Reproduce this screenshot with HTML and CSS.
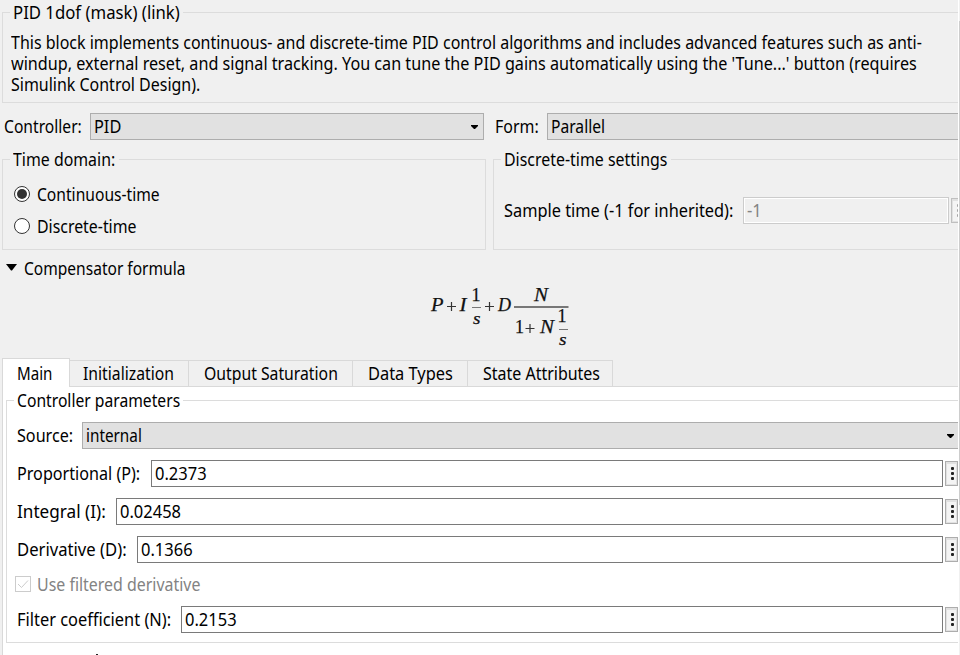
FILE: index.html
```html
<!DOCTYPE html>
<html lang="en">
<head>
<meta charset="utf-8">
<title>Block Parameters: PID Controller</title>
<link rel="stylesheet" href="styles.css">
</head>
<body>
<div class="dialog">
<main class="content">
  <section class="group about">
    <h2 class="legend l-title"><span class="t-title">PID 1dof (mask) (link)</span></h2>
    <p class="desc"><span class="t-d1">This block implements continuous- and discrete-time PID control algorithms and includes advanced features such as anti-</span><br><span class="t-d2">windup, external reset, and signal tracking. You can tune the PID gains automatically using the 'Tune...' button (requires</span><br><span class="t-d3">Simulink Control Design).</span></p>
  </section>

  <div class="row selectors">
    <label class="lab-controller"><span class="t-ctrl">Controller:</span></label>
    <div class="select sel-controller"><span class="t-pid">PID</span><svg class="caret" viewBox="0 0 7 4"><path d="M0 0h7v1L4 4H3L0 1z"/></svg></div>
    <label class="lab-form"><span class="t-form">Form:</span></label>
    <div class="select sel-form"><span class="t-par">Parallel</span></div>
  </div>

  <div class="row domains">
    <section class="group time">
      <h2 class="legend l-td"><span class="t-td">Time domain:</span></h2>
      <label class="radio"><svg viewBox="0 0 16 16"><circle cx="8" cy="8" r="7.5"/><circle class="dot" cx="8" cy="8" r="5"/></svg><span class="t-ct">Continuous-time</span></label>
      <label class="radio"><svg viewBox="0 0 16 16"><circle cx="8" cy="8" r="7.5"/></svg><span class="t-dt">Discrete-time</span></label>
    </section>
    <section class="group discrete">
      <h2 class="legend l-ds"><span class="t-ds">Discrete-time settings</span></h2>
      <div class="sample">
        <label><span class="t-st">Sample time (-1 for inherited):</span></label>
        <div class="input off"><span>-1</span></div>
        <div class="more off"><i></i><i></i><i></i></div>
      </div>
    </section>
  </div>

  <div class="fold"><svg viewBox="0 0 11 7"><path d="M0 0h11L6 6.5H5z"/></svg><span class="t-cf">Compensator formula</span></div>

  <div class="formula">
    <svg width="150" height="70" viewBox="0 0 150 70">
      <g class="it">
        <text x="6" y="30.500" textLength="12.500" lengthAdjust="spacingAndGlyphs">P</text>
        <text x="34.500" y="30.500" textLength="7" lengthAdjust="spacingAndGlyphs">I</text>
        <text x="48" y="44" class="s" textLength="7.500" lengthAdjust="spacingAndGlyphs">s</text>
        <text x="73" y="30.500" textLength="13" lengthAdjust="spacingAndGlyphs">D</text>
        <text x="109" y="20.500" textLength="14" lengthAdjust="spacingAndGlyphs">N</text>
        <text x="115" y="53" textLength="14" lengthAdjust="spacingAndGlyphs">N</text>
        <text x="134" y="65" class="s" textLength="7.500" lengthAdjust="spacingAndGlyphs">s</text>
      </g>
      <g class="num">
        <text x="46.500" y="21">1</text>
        <text x="90" y="53">1</text>
        <text x="132.500" y="42">1</text>
      </g>
      <path class="plus" d="M22 26.500h9M26.500 22v9M60 26.500h9M64.500 22v9M100.500 48.500h9M105 44v9"/>
      <path class="bar" d="M47 27.500h9M134 49.500h9"/>
      <path class="bar main" d="M89 27h54.500"/>
    </svg>
  </div>

  <nav class="tabs">
    <div class="tab on w1"><span class="t-t1">Main</span></div>
    <div class="tab w2"><span class="t-t2">Initialization</span></div>
    <div class="tab w3"><span class="t-t3">Output Saturation</span></div>
    <div class="tab w4"><span class="t-t4">Data Types</span></div>
    <div class="tab w5"><span class="t-t5">State Attributes</span></div>
    <div class="rest"></div>
  </nav>

  <div class="panel">
    <section class="group params">
      <h2 class="legend l-cp"><span class="t-cp">Controller parameters</span></h2>
      <div class="field source"><label><span class="t-src">Source:</span></label><div class="select"><span class="t-int">internal</span><svg class="caret" viewBox="0 0 7 4"><path d="M0 0h7v1L4 4H3L0 1z"/></svg></div></div>
      <div class="field p"><label><span class="t-p">Proportional (P):</span></label><div class="input"><span>0.2373</span></div><div class="more"><i></i><i></i><i></i></div></div>
      <div class="field i"><label><span class="t-i">Integral (I):</span></label><div class="input"><span>0.02458</span></div><div class="more"><i></i><i></i><i></i></div></div>
      <div class="field d"><label><span class="t-dv">Derivative (D):</span></label><div class="input"><span>0.1366</span></div><div class="more"><i></i><i></i><i></i></div></div>
      <label class="check"><svg viewBox="0 0 16 16"><rect x=".5" y=".5" width="15" height="15"/><path d="M3 8l3.500 3.500L13 4.500"/></svg><span class="t-ufd">Use filtered derivative</span></label>
      <div class="field n"><label><span class="t-fc">Filter coefficient (N):</span></label><div class="input"><span>0.2153</span></div><div class="more"><i></i><i></i><i></i></div></div>
    </section>
    <div class="next"></div>
  </div>
</main>
<aside class="scroll"></aside>
</div>
</body>
</html>
```
FILE: styles.css
```css
* { box-sizing: border-box; margin: 0; padding: 0; }
body { width: 960px; height: 655px; overflow: hidden; background: #f0f0f0; color: #000;
  font: 17.5px/21px "Noto Sans", sans-serif; }
svg { display: block; flex: none; }

/* Narrow the UI face; --s is the width factor of each label */
span { --s: .97; display: inline-block; vertical-align: top; white-space: nowrap; transform-origin: 0 50%; transform: scaleX(calc(var(--s) * .971)); }
.t-title { --s: .985; } .t-d1 { --s: .941; } .t-d2 { --s: .951; } .t-d3 { --s: .94; }
.t-ctrl { --s: .92; } .t-pid { --s: .96; } .t-form { --s: .94; } .t-par { --s: .92; }
.t-td { --s: .935; } .t-ct { --s: .919; } .t-dt { --s: .934; } .t-ds { --s: .937; } .t-st { --s: .962; }
.t-cf { --s: .915; }
.t-t1 { --s: .89; } .t-t2 { --s: .925; } .t-t3 { --s: .927; } .t-t4 { --s: .965; } .t-t5 { --s: .94; }
.t-cp { --s: .922; } .t-src { --s: .95; } .t-int { --s: .9; } .t-p { --s: .95; } .t-i { --s: 1.01; }
.t-dv { --s: .98; } .t-ufd { --s: .937; } .t-fc { --s: .965; }

.dialog { display: flex; height: 655px; }
.content { width: 958px; height: 655px; overflow: hidden; display: flex; flex-direction: column; flex: none; }
.scroll { width: 2px; border-left: 1px solid #fff; background: linear-gradient(#f0f0f0 21px, #cdcdcd 21px 505px, #f0f0f0 505px); }
.row { display: flex; }

.group { border: 1px solid #dcdcdc; flex: none; }
.legend { font: inherit; margin: -11px 0 0 7px; padding: 0 3px; background: #f0f0f0; height: 21px; }
.l-title { width: 173px; } .l-td { width: 109px; } .l-ds { width: 170px; } .l-cp { width: 169px; }
.about { margin: 12px 0 0 2px; height: 91px; border-right: 0; }
.desc { padding: 9px 0 0 8px; }

.selectors { margin-top: 10px; height: 27px; padding-left: 4px; line-height: 27px; }
.lab-controller { width: 86px; }
.sel-controller { width: 394px; }
.lab-form { width: 63px; padding-left: 11px; }
.select { height: 27px; border: 1px solid #adadad; background: #e1e1e1; padding: 0 5px 0 3px; display: flex; justify-content: space-between; align-items: center; line-height: 25px; }
.select.sel-form { width: 411px; border-right: 0; }
.caret { width: 7px; height: 4px; }

.domains { margin: 19px 0 0 2px; gap: 7px; height: 91px; }
.time { width: 484px; }
.radio { display: flex; align-items: center; gap: 7px; height: 32px; margin-left: 11px; }
.legend + .radio { margin-top: 8px; }
.radio svg { width: 16px; height: 16px; fill: #fff; stroke: #333; }
.radio .dot { fill: #333; stroke: none; }
.discrete { width: 465px; border-right: 0; }
.sample { display: flex; align-items: center; padding-left: 10px; margin-top: 27px; height: 27px; overflow: hidden; }
.sample label { width: 239px; flex: none; }
.sample .input { width: 206px; flex: none; }

.input { height: 27px; border: 1px solid #7a7a7a; background: #fff; padding-left: 3px; line-height: 25px; }
.input.off { border-color: #ccc; color: #838383; background: #f0f0f0; box-shadow: inset 0 0 0 1px #fff; }
.more { width: 13px; height: 25px; flex: none; margin-left: 2px; border: 1px solid #adadad; background: #f4f4f4; box-shadow: inset 1px 1px 0 #e1e1e1, inset 0 2px 0 #e1e1e1, inset -1px -1px 0 #e1e1e1; display: flex; flex-direction: column; gap: 2px; padding: 5px 0 0 5px; }
.more i { width: 3px; height: 3px; background: #222; border-radius: 1px; }
.more.off { border-color: #bfbfbf; }
.more.off i { background: #a5a5a5; }

.fold { display: flex; height: 21px; margin: 8px 0 0 6px; gap: 7px; }
.fold svg { width: 11px; height: 7px; margin-top: 6px; }
.formula { height: 79px; padding: 1px 0 0 425px; }
.formula text { font-family: "Liberation Serif", serif; font-size: 18px; fill: #111; stroke: #111; stroke-width: .25px; }
.it text { font-style: italic; }
.formula .s { font-size: 17px; }
.plus { stroke: #333; stroke-width: 1.200px; fill: none; }
.bar { stroke: #777; }
.bar.main { stroke-width: 2px; }

.tabs { display: flex; align-items: flex-end; height: 29px; padding-left: 2px; flex: none; }
.tab { height: 27px; border: 1px solid #d9d9d9; border-left: 0; line-height: 24px; padding-left: 15px; }
.tab.on { height: 29px; border-left: 1px solid #d9d9d9; border-bottom: 0; background: #fff; padding-left: 14px; line-height: 29px; }
.w1 { width: 68px; } .w2 { width: 119px; padding-left: 13px; } .w3 { width: 164px; } .w4 { width: 115px; } .w5 { width: 145px; }
.rest { flex: 1; border-bottom: 1px solid #d9d9d9; }
.panel { margin-left: 2px; flex: 1; background: #fff; border-left: 1px solid #d9d9d9; padding: 13px 0 0 3px; }
.params { height: 243px; border-right: 0; }
.params .legend { background: #fff; }
.field { display: flex; align-items: center; height: 27px; margin: 0 0 11px 10px; }
.field .select, .field .input { flex: 1; }
.source { margin-top: 11px; }
.source .select { border-right: 0; padding-right: 4px; }
.field label { flex: none; }
.source label { width: 65px; } .p label { width: 134px; } .i label { width: 99px; } .d label { width: 120px; } .n label { width: 164px; }
.check { display: flex; align-items: center; gap: 6px; height: 21px; margin: 0 0 11px 8px; color: #838383; }
.check svg { width: 16px; height: 16px; margin-top: -1px; fill: #fff; stroke: #ccc; }
.next { width: 2px; height: 1px; margin: 11px 0 0 90px; background: #222; }
```
